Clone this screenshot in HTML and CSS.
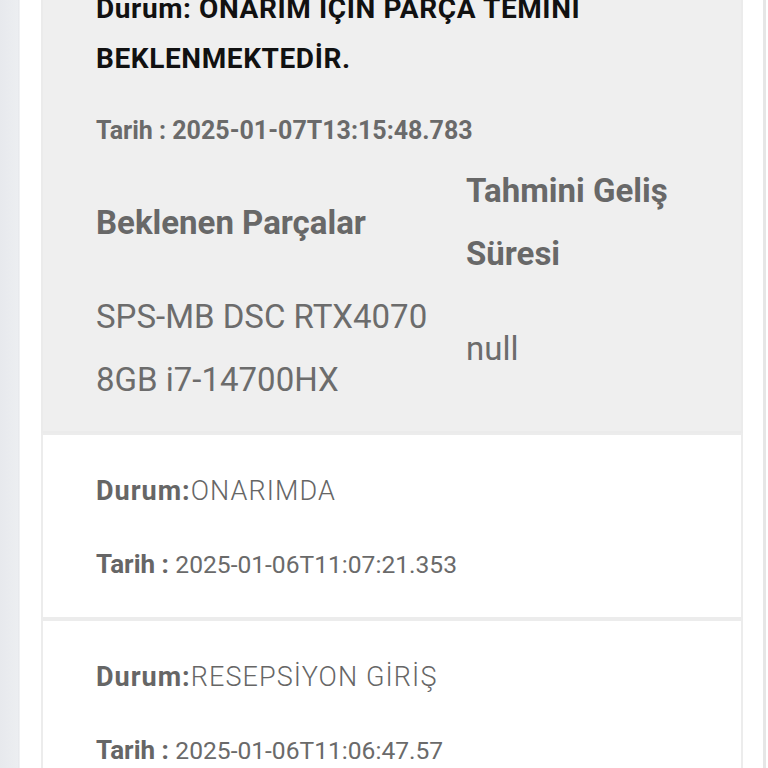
FILE: index.html
```html
<!DOCTYPE html>
<html lang="tr">
<head>
<meta charset="utf-8">
<title>Servis Durumu</title>
<link rel="stylesheet" href="styles.css">
</head>
<body>
<div class="screen">
  <div class="card card-active">
    <p class="title">Durum: ONARIM İÇİN PARÇA TEMİNİ BEKLENMEKTEDİR.</p>
    <p class="date-top">Tarih : 2025-01-07T13:15:48.783</p>
    <div class="parts">
      <div class="cell head">Beklenen Parçalar</div>
      <div class="cell head col2">Tahmini Geliş Süresi</div>
      <div class="cell val">SPS-MB DSC RTX4070 8GB i7-14700HX</div>
      <div class="cell val col2">null</div>
    </div>
  </div>
  <div class="card">
    <p class="line"><span class="lbl">Durum:</span><span class="status">ONARIMDA</span></p>
    <p class="line line-date"><span class="lbl-date">Tarih : </span><span class="dval">2025-01-06T11:07:21.353</span></p>
  </div>
  <div class="card">
    <p class="line"><span class="lbl">Durum:</span><span class="status">RESEPSİYON GİRİŞ</span></p>
    <p class="line line-date"><span class="lbl-date">Tarih : </span><span class="dval">2025-01-06T11:06:47.57</span></p>
  </div>
</div>
</body>
</html>
```
FILE: styles.css
```css
html, body {
  margin: 0;
  padding: 0;
  height: 100%;
  overflow: hidden;
}
body {
  background: linear-gradient(to right, #e7e9ed 0, #eceef1 18px, #e3e5e9 19px, #ffffff 20px);
  font-family: Roboto, "Noto Sans", "Liberation Sans", sans-serif;
  color: #666666;
}
.screen {
  margin: 0 2px 0 20px;
  background: #ffffff;
  border-right: 3px solid #e6e6e6;
  padding: 0 20px 0 21px;
  min-height: 100%;
}
.card {
  border: 2px solid #ececec;
  background: #ffffff;
  padding: 36px 53px 32px 53px;
}
.card-active {
  margin-top: -54px;
  background: #efefef;
  border-color: #ebebeb;
  padding-bottom: 20px;
}
p {
  margin: 0;
}
.title {
  font-size: 28px;
  line-height: 50px;
  font-weight: 700;
  letter-spacing: 0.6px;
  color: #111111;
}
.date-top {
  margin-top: 27px;
  font-size: 25px;
  line-height: 40px;
  font-weight: 700;
  color: #6a6a6a;
}
.parts {
  margin-top: 8px;
  display: grid;
  grid-template-columns: 370px 1fr;
  align-items: center;
}
.cell {
  font-size: 33px;
  line-height: 63px;
}
.head {
  font-weight: 700;
  color: #686868;
}
.val {
  font-weight: 400;
  color: #6c6c6c;
}
.line {
  font-size: 27px;
  line-height: 40px;
}
.line-date {
  margin-top: 33px;
}
.lbl {
  font-weight: 700;
  letter-spacing: 1px;
  color: #666666;
}
.status {
  font-weight: 300;
  letter-spacing: 1.1px;
  color: #666666;
}
.lbl-date {
  font-size: 26px;
  font-weight: 700;
  color: #666666;
}
.dval {
  font-size: 24.6px;
  font-weight: 400;
  color: #6a6a6a;
}
```
